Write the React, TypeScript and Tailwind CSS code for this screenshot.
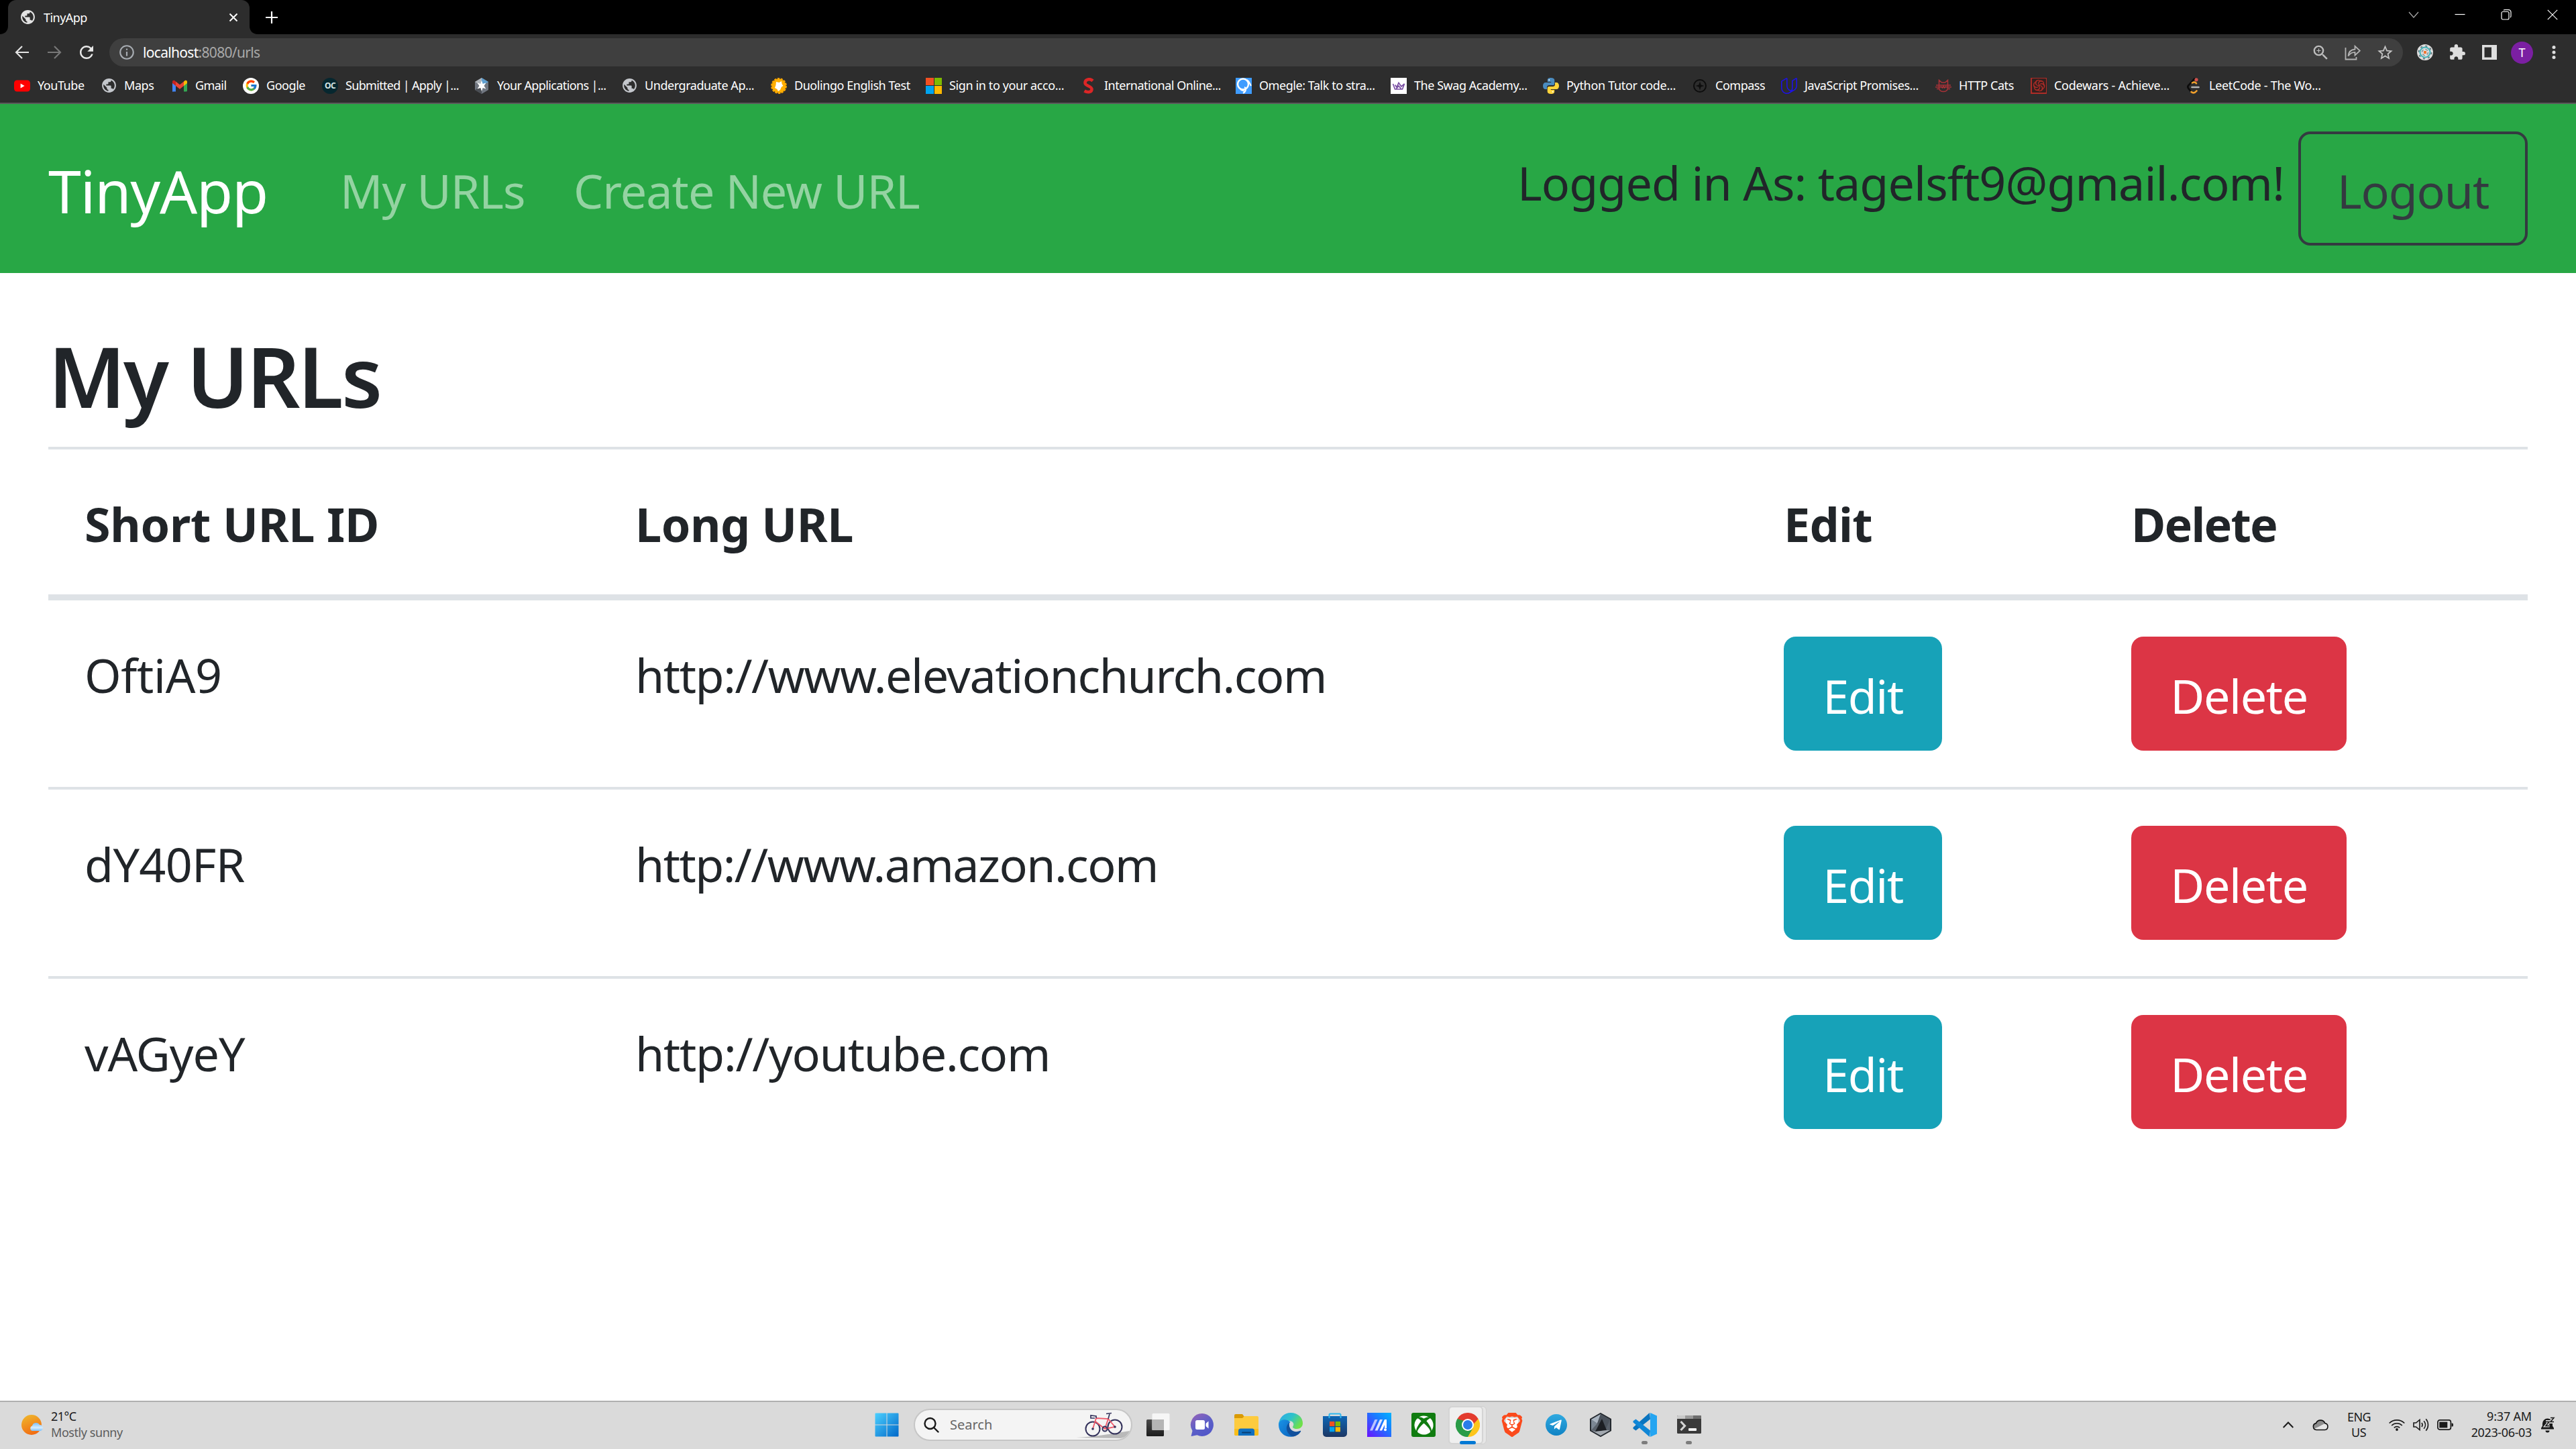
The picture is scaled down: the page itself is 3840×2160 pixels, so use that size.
import type { ReactNode } from "react";
import { FcGoogle } from "react-icons/fc";
import { SiBrave, SiCodewars, SiUdacity } from "react-icons/si";
import { FaTelegramPlane, FaXbox } from "react-icons/fa";
import { MdPublic, MdExtension, MdZoomIn, MdStarBorder, MdInfoOutline, MdRefresh } from "react-icons/md";

/* ---------- bookmark icons ---------- */

const Globe = () => <MdPublic className="-mr-px -ml-px size-[25px] text-[#c4c7cc]" />;

const YouTube = () => (
  <svg viewBox="0 0 24 24" className="size-6">
    <rect x="0" y="3.5" width="24" height="17" rx="4.5" fill="#ff0000" />
    <path d="M9.6 8.4v7.2l6-3.6z" fill="#fff" />
  </svg>
);

const Gmail = () => (
  <svg viewBox="0 0 24 24" className="size-6">
    <path d="M1 20.5V6l5 4v10.500H2.500A1.500 1.500 0 0 1 1 20.500z" fill="#4285f4" />
    <path d="M18 20.500V10l5-4v13a1.500 1.500 0 0 1-1.500 1.500z" fill="#34a853" />
    <path d="M18 5.500l1.500-1.200C21 3.200 23 4.200 23 6v2l-5 4z" fill="#fbbc04" />
    <path d="M6 12V5.500l6 4.800 6-4.800V12l-6 4.800z" fill="#ea4335" />
    <path d="M1 8V6c0-1.800 2-2.800 3.500-1.700L6 5.500V12z" fill="#c5221f" />
  </svg>
);

const Google = () => (
  <span className="flex size-6 items-center justify-center rounded-full bg-white">
    <FcGoogle className="size-[19px]" />
  </span>
);

const Ouac = () => (
  <span className="flex size-6 items-center justify-center rounded-full bg-[#06272f] text-[12px] font-bold tracking-[-0.04em] text-[#d8e6e6]">OC</span>
);

const Hexagon = () => (
  <svg viewBox="0 0 24 24" className="size-6">
    <path d="M12 0l10 6v12l-10 6L2 18V6z" fill="#707680" />
    <path d="M12 0l10 6-10 6z" fill="#5f9fcf" />
    <path d="M12 0L2 6l10 6z" fill="#aeb4ba" />
    <path d="M2 18l10-6v12z" fill="#4a4e54" />
    <path d="M12 4l1.700 5L18.500 7.500 15.500 12l3 4.500-4.800-1.500L12 20l-1.700-5-4.800 1.500 3-4.500-3-4.500L10.300 9z" fill="#fff" />
  </svg>
);

const Duolingo = () => (
  <svg viewBox="0 0 24 24" className="size-6">
    <circle cx="12" cy="12" r="10.600" fill="none" stroke="#ffa600" strokeWidth="2.600" strokeDasharray="3.300 1.450" />
    <circle cx="12" cy="12" r="10.500" fill="#ffae00" />
    <path d="M8 6l4.500 1L16 5l.500 4 2 3-2.500 1.500L14 18l-3 2-1.500-3L6 15l1.500-4z" fill="#fff" />
  </svg>
);

const Microsoft = () => (
  <span className="grid size-6 grid-cols-2 gap-px">
    <span className="bg-[#f25022]" />
    <span className="bg-[#7fba00]" />
    <span className="bg-[#00a4ef]" />
    <span className="bg-[#ffb900]" />
  </span>
);

const RedS = () => (
  <svg viewBox="0 0 24 24" className="size-6">
    <path d="M18 4.500C14 0.500 6.500 2 6.500 7.500c0 5 10 4.500 10 9.500 0 4.500-6 5.500-11 2.500" fill="none" stroke="#dc2626" strokeWidth="4.600" />
  </svg>
);

const Omegle = () => (
  <svg viewBox="0 0 24 24" className="size-6">
    <rect width="24" height="24" fill="#3f9cff" />
    <ellipse cx="11" cy="9.500" rx="8" ry="8" fill="none" stroke="#fff" strokeWidth="2.400" />
    <path d="M17 3c4 3 4.500 7 6 9M13 14c3 1 3 6-2 9M7 17c2 3 4 1 6 3" fill="none" stroke="#fff" strokeWidth="2" />
  </svg>
);

const Swag = () => (
  <svg viewBox="0 0 24 24" className="size-6">
    <rect width="24" height="24" fill="#fff" />
    <path d="M3.500 9l3 8h11l3-8-4.500 4L12 7.500 9 14 6.500 10.500M8 17l4-5 4 5" fill="none" stroke="#7a4fa3" strokeWidth="1.700" />
  </svg>
);

const Python = () => (
  <svg viewBox="0 0 24 24" className="size-6">
    <path d="M12 0C8 0 6.800 1.500 6.800 3.500V6H12.200v1H4C1.500 7 0 9 0 12s1.500 5 3.800 5H6v-3c0-2 1.500-3 3.200-3h5.600c1.600 0 2.500-1.200 2.500-2.600V3.500C17.300 1.400 15.500 0 12 0z" fill="#4b8bbe" />
    <path d="M12 24c4 0 5.200-1.500 5.200-3.500V18h-5.400v-1H20c2.500 0 4-2 4-5s-1.500-5-3.800-5H18v3c0 2-1.500 3-3.200 3H9.200c-1.600 0-2.500 1.200-2.500 2.600v4.900C6.700 22.600 8.500 24 12 24z" fill="#ffd43b" />
    <circle cx="9.300" cy="3.200" r="1" fill="#fff" />
    <circle cx="14.700" cy="20.800" r="1" fill="#fff" />
  </svg>
);

const Compass = () => (
  <svg viewBox="0 0 24 24" className="size-6">
    <circle cx="12" cy="12" r="9" fill="none" stroke="#0d0d0d" strokeWidth="2" />
    <path d="M12 5.500l1.600 4.900L18.500 12l-4.900 1.600L12 18.500l-1.600-4.900L5.500 12l4.900-1.600z" fill="#0d0d0d" />
  </svg>
);

const Udacity = () => <SiUdacity className="size-6 text-[#1d12e8]" />;

const HttpCats = () => (
  <svg viewBox="0 0 24 24" className="size-6" fill="none" stroke="#a83238" strokeWidth="1.600">
    <path d="M5.500 11V3.500l4 3.500h5l4-3.500V15c0 3.500-3 5.500-6.500 5.500S5.500 18.500 5.500 15v-4M1 11h22M0 13.800h24M8 12.500l2.500 2.500L12 12.500l1.500 2.500 2.500-2.500M2 16.500h3M19 16.500h3" />
  </svg>
);

const Codewars = () => (
  <span className="flex size-6 items-center justify-center bg-[#ad2c27]">
    <SiCodewars className="size-[21px] text-[#33201f]" />
  </span>
);

const LeetCode = () => (
  <svg viewBox="0 0 24 24" className="size-6" fill="none" strokeWidth="2.600" strokeLinecap="round">
    <path d="M13 1.500L4.500 11c-1.500 1.600-1.500 3.500 0 5.200l4 4.800" stroke="#0b0b0b" />
    <path d="M10 7.500c2.500-1.600 4.500-1.200 6 .800M8.500 21c3 2.500 5.500 1.500 8-1.500" stroke="#f0a02c" />
    <path d="M9.500 14h10" stroke="#b5b5b5" />
    <circle cx="16" cy="2.800" r="2.600" fill="#d3504c" />
  </svg>
);

const bookmarks: { name: string; cls: string; icon: ReactNode }[] = [
  { name: "YouTube", cls: "w-[130px] tracking-[-0.028em]", icon: <YouTube /> },
  { name: "Maps", cls: "w-[105px] tracking-[-0.028em]", icon: <Globe /> },
  { name: "Gmail", cls: "w-[106px] tracking-[-0.035em]", icon: <Gmail /> },
  { name: "Google", cls: "w-[118px] tracking-[-0.028em]", icon: <Google /> },
  { name: "Submitted | Apply |...", cls: "w-[226px] tracking-[-0.042em]", icon: <Ouac /> },
  { name: "Your Applications |...", cls: "w-[221px] tracking-[-0.038em]", icon: <Hexagon /> },
  { name: "Undergraduate Ap...", cls: "w-[222px] tracking-[-0.028em]", icon: <Globe /> },
  { name: "Duolingo English Test", cls: "w-[231px] tracking-[-0.028em]", icon: <Duolingo /> },
  { name: "Sign in to your acco...", cls: "w-[231px] tracking-[-0.024em]", icon: <Microsoft /> },
  { name: "International Online...", cls: "w-[231px] tracking-[-0.031em]", icon: <RedS /> },
  { name: "Omegle: Talk to stra...", cls: "w-[231px] tracking-[-0.028em]", icon: <Omegle /> },
  { name: "The Swag Academy...", cls: "w-[227px] tracking-[-0.028em]", icon: <Swag /> },
  { name: "Python Tutor code...", cls: "w-[222px] tracking-[-0.02em]", icon: <Python /> },
  { name: "Compass", cls: "w-[133px] tracking-[-0.03em]", icon: <Compass /> },
  { name: "JavaScript Promises...", cls: "w-[230px] tracking-[-0.027em]", icon: <Udacity /> },
  { name: "HTTP Cats", cls: "w-[142px] tracking-[-0.028em]", icon: <HttpCats /> },
  { name: "Codewars - Achieve...", cls: "w-[231px] tracking-[-0.018em]", icon: <Codewars /> },
  { name: "LeetCode - The Wo...", cls: "w-[230px] tracking-[-0.018em]", icon: <LeetCode /> },
];

/* ---------- browser chrome ---------- */

function TabStrip() {
  return (
    <div className="flex h-[51px] items-start bg-black text-white">
      <div className="relative ml-3 flex h-[51px] w-[360px] items-center rounded-t-[12px] bg-[#2d2d2d] pl-[18px]">
        <svg viewBox="0 0 12 12" className="absolute bottom-0 -left-3 size-3" fill="#2d2d2d">
          <path d="M12 0v12H0C7 12 12 7 12 0z" />
        </svg>
        <svg viewBox="0 0 12 12" className="absolute -right-3 bottom-0 size-3" fill="#2d2d2d">
          <path d="M0 0v12h12C5 12 0 7 0 0z" />
        </svg>
        <MdPublic className="-ml-px size-[25px] text-[#e3e3e3]" />
        <span className="ml-[11px] text-[18px] leading-6 tracking-[-0.03em]">TinyApp</span>
        <svg viewBox="0 0 12 12" className="mr-[18px] ml-auto size-3" stroke="#fff" strokeWidth="2">
          <path d="M.500.500l11 11M11.500.500l-11 11" />
        </svg>
      </div>
      <svg viewBox="0 0 18 18" className="mt-[17px] ml-6 size-[18px]" stroke="#fff" strokeWidth="2.200">
        <path d="M9 0v18M0 9h18" />
      </svg>
      <div className="mt-3.5 mr-[27px] ml-auto flex gap-[53px]">
        <svg viewBox="0 0 16 16" className="size-4" fill="none" stroke="#a8a8a8" strokeWidth="1.200">
          <path d="M1 4l7 8 7-8" />
        </svg>
        <svg viewBox="0 0 16 16" className="size-4" stroke="#fff" strokeWidth="1.200">
          <path d="M.500 7.500h15" />
        </svg>
        <svg viewBox="0 0 16 16" className="size-4" fill="none" stroke="#fff" strokeWidth="1.200">
          <rect x="1" y="3.500" width="11" height="11.500" rx="2" />
          <path d="M4 1.500c.600-.700 1.200-.900 2-.900h5.500a3.500 3.500 0 0 1 3.500 3.500v6c0 .800-.200 1.400-.900 2" />
        </svg>
        <svg viewBox="0 0 16 16" className="size-4" stroke="#fff" strokeWidth="1.200">
          <path d="M.800.800l14.400 14.400M15.200.800L.800 15.200" />
        </svg>
      </div>
    </div>
  );
}

function Toolbar() {
  return (
    <div className="flex h-[51px] items-center bg-[#2d2d2d] pt-[3px]">
      <svg viewBox="0 0 24 24" className="ml-[21px] size-6" fill="none" stroke="#e3e3e3" strokeWidth="2.200">
        <path d="M22 12H3M12 3l-9 9 9 9" />
      </svg>
      <svg viewBox="0 0 24 24" className="ml-6 size-6" fill="none" stroke="#777" strokeWidth="2.200">
        <path d="M2 12h19M12 3l9 9-9 9" />
      </svg>
      <MdRefresh className="ml-[21px] size-[30px] text-[#e8e8e8]" />
      <div className="ml-[19px] flex h-[42px] w-[3419px] items-center rounded-full bg-[#3f3f3f] pr-[13px] pl-[13px]">
        <MdInfoOutline className="size-[26px] text-[#a8adb3]" />
        <span className="ml-[11px] text-[21px] leading-7 tracking-[-0.0325em] text-[#a9a9a9]">
          <span className="text-white">localhost</span>:8080/urls
        </span>
        <MdZoomIn className="ml-auto size-[29px] text-[#bcbcbc]" />
        <svg viewBox="0 0 24 24" className="ml-[21px] size-6" fill="none" stroke="#b4b4b4" strokeWidth="1.800">
          <path d="M1.500 5v17.500h16V19M5.500 17.500C6 11 9.500 8 15.500 7.500V2.800l7.300 6.800-7.300 6.800v-4.600c-4.500 0-7.500 1.700-10 5.700z" />
        </svg>
        <MdStarBorder className="ml-[23px] size-[27px] text-[#c4c4c4]" />
      </div>
      <div className="ml-[21px] flex items-center">
        <svg viewBox="0 0 24 24" className="size-6" fill="none">
          <circle cx="12" cy="12" r="12" fill="#dedede" />
          <circle cx="12" cy="12" r="9.500" stroke="#6b7b80" strokeWidth="2" strokeDasharray="3 4.460" />
          <circle cx="12" cy="12" r="7.500" stroke="#45b3b8" strokeWidth="2" />
          <circle cx="12" cy="12" r="4.500" stroke="#6b7b80" strokeWidth="1.200" strokeDasharray="4 3" />
          <rect x="10" y="10" width="4" height="4" fill="#f07832" />
        </svg>
        <MdExtension className="ml-[23px] size-[26px] text-[#dedede]" />
        <svg viewBox="0 0 22 22" className="ml-6 size-[22px]">
          <rect width="22" height="22" fill="#dedede" />
          <rect x="3.500" y="3.500" width="10.500" height="15" fill="#2d2d2d" />
        </svg>
        <span className="ml-[21px] flex size-[33px] items-center justify-center rounded-full bg-[#7b1fa2] text-[18px] text-white">T</span>
        <svg viewBox="0 0 6 22" className="ml-7 h-[22px] w-1.5" fill="#dedede">
          <circle cx="3" cy="3.500" r="2.500" />
          <circle cx="3" cy="11" r="2.500" />
          <circle cx="3" cy="18.500" r="2.500" />
        </svg>
      </div>
    </div>
  );
}

function BookmarkBar() {
  return (
    <div className="flex h-[53px] items-center border-b-2 border-[#5a5a5a] bg-[#2d2d2d] pl-[21px] text-white">
      {bookmarks.map((b) => (
        <div key={b.name} className={`flex shrink-0 items-center gap-[11px] whitespace-nowrap ${b.cls}`}>
          {b.icon}
          <span className="-mt-0.5 text-[18px] leading-6">{b.name}</span>
        </div>
      ))}
    </div>
  );
}

/* ---------- page ---------- */

function Navbar() {
  return (
    <nav className="flex h-[252px] items-start bg-[#28a745] px-[72px] whitespace-nowrap">
      <span className="mt-[69px] w-[435px] text-[88px] leading-[120px] tracking-[-0.0138em] text-white">TinyApp</span>
      <span className="mt-[75px] w-[348px] text-[70px] leading-[108px] tracking-[-0.0138em] text-white/50">My URLs</span>
      <span className="mt-[75px] text-[70px] leading-[108px] tracking-[-0.0139em] text-white/50">Create New URL</span>
      <span className="mt-[63px] ml-auto w-[1164px] text-[70px] leading-[108px] tracking-[-0.0132em] text-[#212529]">
        Logged in As: tagelsft9@gmail.com!
      </span>
      <button className="mt-[41px] h-[170px] w-[342px] rounded-[18px] border-4 border-[#343a40] pt-1.5 text-center text-[70px] leading-[108px] tracking-[-0.016em] text-[#343a40]">
        Logout
      </button>
    </nav>
  );
}

const rows = [
  { id: "OftiA9", url: "http://www.elevationchurch.com", idLs: "tracking-[-0.005em]", urlLs: "tracking-[-0.0204em]" },
  { id: "dY40FR", url: "http://www.amazon.com", idLs: "tracking-[-0.0095em]", urlLs: "tracking-[-0.0221em]" },
  { id: "vAGyeY", url: "http://youtube.com", idLs: "tracking-[-0.0144em]", urlLs: "tracking-[-0.0175em]" },
];

function UrlTable() {
  return (
    <div className="mt-[31px] text-[70px] leading-[108px] text-[#212529]">
      <div className="grid h-[229px] grid-cols-[821px_1712px_518px_1fr] border-t-4 border-b-[9px] border-[#dee2e6] pt-[57px] font-bold">
        <div className="pl-[54px] tracking-[-0.004em]">Short URL ID</div>
        <div className="pl-[54px] tracking-[-0.007em]">Long URL</div>
        <div className="pl-[54px] tracking-[-0.01em]">Edit</div>
        <div className="pl-[54px] tracking-[-0.0256em]">Delete</div>
      </div>
      <div>
        {rows.map((r) => (
          <div key={r.id} className="grid grid-cols-[821px_1712px_518px_1fr] border-t-4 border-[#dee2e6] first:border-t-0">
            <div className={`pt-[57px] pl-[54px] ${r.idLs}`}>{r.id}</div>
            <div className={`pt-[57px] pl-[54px] ${r.urlLs}`}>{r.url}</div>
            <div className="h-[278px] pt-[54px] pl-[54px]">
              <button className="block h-[170px] w-[236px] rounded-[18px] bg-[#17a2b8] pt-1.5 text-center tracking-[-0.02em] text-white">Edit</button>
            </div>
            <div className="h-[278px] pt-[54px] pl-[54px]">
              <button className="block h-[170px] w-[321px] rounded-[18px] bg-[#dc3545] pt-1.5 text-center tracking-[-0.02em] text-white">Delete</button>
            </div>
          </div>
        ))}
      </div>
    </div>
  );
}

/* ---------- taskbar icons ---------- */

const box = "size-9 shrink-0";

const WindowsLogo = () => (
  <svg viewBox="0 0 36 36" className={box}>
    <defs>
      <linearGradient id="win" x1="0" y1="0" x2="1" y2="1">
        <stop offset="0" stopColor="#4cd0ff" />
        <stop offset="1" stopColor="#0067c8" />
      </linearGradient>
    </defs>
    <path d="M1.500 .500h16v17h-17v-16a1 1 0 0 1 1-1zM18.500.500h16a1 1 0 0 1 1 1v16h-17zM.500 18.500h17v17h-16a1 1 0 0 1-1-1zM18.500 18.500h17v16a1 1 0 0 1-1 1h-16z" fill="url(#win)" />
  </svg>
);

const TaskView = () => (
  <svg viewBox="0 0 36 36" className={box}>
    <defs>
      <linearGradient id="tv" x1="0" y1="0" x2="0" y2="1">
        <stop offset="0" stopColor="#4a4a4a" />
        <stop offset="1" stopColor="#1c1c1c" />
      </linearGradient>
    </defs>
    <rect x="1" y="10" width="26" height="25" rx="1.500" fill="url(#tv)" />
    <rect x="9.500" y="1" width="26" height="25" rx="1.500" fill="#f6f6f6" />
    <rect x="9.500" y="10" width="17.500" height="16" fill="#b4b4b4" />
  </svg>
);

const Chat = () => (
  <svg viewBox="0 0 36 36" className={box}>
    <defs>
      <linearGradient id="chat" x1="0" y1="0" x2=".6" y2="1">
        <stop offset="0" stopColor="#9a64b8" />
        <stop offset=".6" stopColor="#5b5fc7" />
        <stop offset="1" stopColor="#5257c9" />
      </linearGradient>
    </defs>
    <path d="M18 1a17 17 0 1 1-7.500 32.300L1.500 35l2-8A17 17 0 0 1 18 1z" fill="url(#chat)" />
    <rect x="8" y="11" width="14" height="14" rx="2.500" fill="#fff" />
    <path d="M23.500 16l4-3.500v11l-4-3.500z" fill="#fff" />
  </svg>
);

const Folder = () => (
  <svg viewBox="0 0 36 36" className={box}>
    <path d="M0 4a2 2 0 0 1 2-2h10l3 4v4H0z" fill="#d99a06" />
    <path d="M0 8h12l3-3h19a2 2 0 0 1 2 2v25a2 2 0 0 1-2 2H2a2 2 0 0 1-2-2z" fill="#fdcb3e" />
    <path d="M0 24h36v8a2 2 0 0 1-2 2H2a2 2 0 0 1-2-2z" fill="#f9bd1c" />
    <path d="M6 34V27a3.500 3.500 0 0 1 3.500-3.500h17A3.500 3.500 0 0 1 30 27v7z" fill="#0f6fc0" />
    <rect x="11" y="28.500" width="14" height="2" rx="1" fill="#083f73" />
  </svg>
);

const Edge = () => (
  <svg viewBox="0 0 36 36" className={box}>
    <defs>
      <linearGradient id="e1" x1="0" y1="0" x2="1" y2=".5">
        <stop offset="0" stopColor="#2aa9ea" />
        <stop offset=".55" stopColor="#2fc2c9" />
        <stop offset="1" stopColor="#6fe04a" />
      </linearGradient>
      <linearGradient id="e2" x1="0" y1="0" x2="1" y2="1">
        <stop offset="0" stopColor="#1a93e6" />
        <stop offset="1" stopColor="#0a62bd" />
      </linearGradient>
    </defs>
    <path d="M0 17C1 7 8.500 0 18 0c10.500 0 18 7 18 15.500 0 5.500-4 8.500-8.500 8.500-5 0-7.500-2-6-4 2.500-3.500-.500-8-6-8C8 12 1 15 0 17z" fill="url(#e1)" />
    <path d="M0 18C0 11 8 9 13 11c3 1 4.500 3 4.500 3C12 17 12 28 21 33.500c1.500 1 2.500 1.500 0 2C10 37.500 0 29.500 0 18z" fill="url(#e2)" />
    <path d="M16 14.500C8 21 12.500 33 22 35.500c5-1 9-4 11-7.500.500-1-.300-1.500-1.200-1-8 3.500-17.500-1-15.800-12.500z" fill="#11509c" />
  </svg>
);

const Store = () => (
  <svg viewBox="0 0 36 36" className={box}>
    <defs>
      <linearGradient id="st" x1="0" y1="0" x2="0" y2="1">
        <stop offset="0" stopColor="#0d66b5" />
        <stop offset="1" stopColor="#1c3764" />
      </linearGradient>
    </defs>
    <path d="M0 5h36v26a5 5 0 0 1-5 5H5a5 5 0 0 1-5-5z" fill="url(#st)" />
    <path d="M9.500 8V3a1.500 1.500 0 0 1 1.500-1.500h14A1.500 1.500 0 0 1 26.500 3v5" fill="none" stroke="#30b7ee" strokeWidth="2" />
    <path d="M10 13h7.300v7H10z" fill="#f25022" />
    <path d="M18.700 13H26v7h-7.300z" fill="#7fba00" />
    <path d="M10 21.300h7.300v7H10z" fill="#00a4ef" />
    <path d="M18.700 21.300H26v7h-7.300z" fill="#ffb900" />
  </svg>
);

const MyAsus = () => (
  <svg viewBox="0 0 36 36" className={box}>
    <defs>
      <linearGradient id="ma" x1="0" y1="1" x2="1" y2="0">
        <stop offset="0" stopColor="#6a11ff" />
        <stop offset=".6" stopColor="#1a7bff" />
        <stop offset="1" stopColor="#00b4ff" />
      </linearGradient>
    </defs>
    <rect width="36" height="36" fill="url(#ma)" />
    <path d="M4 26.500l7.500-16.500h4L8 26.500z" fill="#b9c3ff" />
    <path d="M11.500 26.500L19 10h4l-7.500 16.500z" fill="#dfe4ff" />
    <path d="M18.500 26.500L26 10h3v13h-3v-5l-4 8.500z" fill="#fff" />
    <circle cx="27" cy="25.200" r="2" fill="#fff" />
  </svg>
);

const Xbox = () => (
  <span className="flex size-9 shrink-0 items-center justify-center rounded-[3px] bg-[#107c10]">
    <FaXbox className="size-[29px] text-white" />
  </span>
);

const Chrome = () => (
  <span className="relative size-9 shrink-0">
    <span className="absolute -top-2.5 -left-[11px] h-[57px] w-[57px] rounded-md border border-[#cfcfcf] bg-[#e6e6e6]" />
    <span className="absolute -top-2.5 -left-[11px] h-[57px] w-[52px] rounded-md border-2 border-[#d4d4d4] bg-[#efefef]" />
    <svg viewBox="0 0 36 36" className="absolute inset-0 size-9">
      <path d="M18 18L2.400 9A18 18 0 0 1 33.600 9z" fill="#e33b2e" />
      <path d="M18 18V36A18 18 0 0 1 2.400 9z" fill="#2a9c48" />
      <path d="M18 18L33.600 9A18 18 0 0 1 18 36z" fill="#fdc51b" />
      <path d="M18 9h15.600l-8 9z" fill="#e33b2e" />
      <path d="M10.200 22.500L2.400 9l10 3z" fill="#2a9c48" />
      <path d="M25.800 22.500L18 36l-2-10z" fill="#fdc51b" />
      <path d="M10.200 22.500l7.800 4.500 7.800-4.500L18 36a18 18 0 0 1-8-2.200z" fill="#2a9c48" />
      <circle cx="18" cy="18" r="9" fill="#fff" />
      <circle cx="18" cy="18" r="7" fill="#2b7de9" />
    </svg>
    <span className="absolute top-[42px] left-1.5 h-[5px] w-6 rounded-full bg-[#0078d4]" />
  </span>
);

const Brave = () => (
  <span className="relative flex size-9 shrink-0 items-center justify-center">
    <span className="absolute top-2 left-[9px] h-[21px] w-[18px] rounded-b-full bg-white" />
    <SiBrave className="relative size-9 text-[#fb4a1c]" />
  </span>
);

const Telegram = () => (
  <span className="mx-0.5 flex size-8 shrink-0 items-center justify-center self-center rounded-full bg-linear-to-b from-[#2fa9e0] to-[#0f83c4]">
    <FaTelegramPlane className="mr-0.5 size-5 text-white" />
  </span>
);

const Hex = () => (
  <svg viewBox="0 0 36 36" className={box}>
    <path d="M18 1l15 8.500v17L18 35 3 26.500v-17z" fill="#59616b" stroke="#23282e" strokeWidth="2" />
    <path d="M18 2L4 10l9 6z" fill="#a9b4c0" />
    <path d="M4 10v16l9-10z" fill="#7b8794" />
    <path d="M18 2l14 8-6 14-13-8z" fill="#4a525c" />
    <path d="M20 9l7 17-17 2z" fill="#1c1f24" />
    <path d="M4 26l14 8 14-8-5 0-17 2z" fill="#a2a8af" />
  </svg>
);

const VsCode = () => (
  <span className="relative size-9 shrink-0">
    <svg viewBox="0 0 36 36" className="size-9">
      <path d="M26 9.500L4.500 26.500.500 23.800v-2L25 0z" fill="#0a74bf" />
      <path d="M26 26.500L4.500 9.500.500 12.200v2L25 36z" fill="#0f86d6" />
      <path d="M26 0l10 4.500v27L26 36z" fill="#25a5f1" />
    </svg>
    <span className="absolute top-[42px] left-[13px] h-[5px] w-[9px] rounded-full bg-[#7c7c7c]" />
  </span>
);

const Terminal = () => (
  <span className="relative size-9 shrink-0">
    <svg viewBox="0 0 36 36" className="size-9">
      <rect y="4" width="36" height="27" rx="1.500" fill="#3a3a3a" />
      <path d="M0 5.500A1.500 1.500 0 0 1 1.500 4H12v5H0z" fill="#c9c9c9" />
      <path d="M12 4h12v5H12z" fill="#999" />
      <path d="M24 4h10.500A1.500 1.500 0 0 1 36 5.500V9H24z" fill="#6e6e6e" />
      <path d="M5.500 13l6 6.500-6 6.500" fill="none" stroke="#d4d4d4" strokeWidth="3.200" />
      <rect x="17" y="23" width="12" height="4" rx="1" fill="#f4f4f4" />
    </svg>
    <span className="absolute top-[42px] left-[13px] h-[5px] w-[9px] rounded-full bg-[#7c7c7c]" />
  </span>
);

const Bike = () => (
  <svg viewBox="0 0 84 44" className="h-11 w-[84px]" fill="none">
    <path d="M2 41c25-1 50-5 80-10-2 6-6 10-14 11z" fill="#b9b9b9" />
    <circle cx="27" cy="28" r="10.500" stroke="#35335c" strokeWidth="2" />
    <circle cx="60" cy="25" r="10.500" stroke="#35335c" strokeWidth="2" />
    <path d="M27 28l5-16 18 1-5 15-14-11M50 13l10 12-15 3" stroke="#ee5a6b" strokeWidth="1.800" />
    <path d="M32 12V9l-8-1v4h6M50 13l2-7M47 5.500l8-1" stroke="#35335c" strokeWidth="1.700" />
    <circle cx="45" cy="28" r="3.500" stroke="#35335c" strokeWidth="2" />
    <circle cx="27" cy="28" r="1.800" fill="#35335c" />
    <circle cx="60" cy="25" r="1.800" fill="#35335c" />
  </svg>
);

function Taskbar() {
  return (
    <div className="flex h-[72px] items-center border-t-2 border-[#b0b0b0] bg-[#dadada] pb-0.5 text-[18px] leading-6 whitespace-nowrap text-[#1a1a1a]">
      <div className="flex w-[1304px] shrink-0 items-center pl-8">
        <svg viewBox="0 0 34 32" className="h-8 w-[34px]">
          <defs>
            <linearGradient id="sun" x1=".2" y1="0" x2=".6" y2="1">
              <stop offset="0" stopColor="#efb62c" />
              <stop offset="1" stopColor="#f26a12" />
            </linearGradient>
            <linearGradient id="cl" x1="0" y1="0" x2="0" y2="1">
              <stop offset="0" stopColor="#7cc0fb" />
              <stop offset=".6" stopColor="#d6edff" />
              <stop offset="1" stopColor="#7cc0fb" />
            </linearGradient>
          </defs>
          <circle cx="15" cy="16" r="15" fill="url(#sun)" />
          <path d="M16 25a4 4 0 0 1 0-7.600 6 6 0 0 1 11-1.400 4.600 4.600 0 0 1 1.500 9z" fill="url(#cl)" />
        </svg>
        <div className="-mt-0.5 ml-2.5">
          <div className="tracking-[-0.03em]">21°C</div>
          <div className="tracking-[-0.0244em] text-[#5c5c5c]">Mostly sunny</div>
        </div>
      </div>
      <WindowsLogo />
      <div className="mr-5 ml-[22px] flex h-12 w-[326px] shrink-0 items-center overflow-hidden rounded-full border-2 border-[#c6c6c6] bg-[#f4f4f4] pl-3">
        <svg viewBox="0 0 24 24" className="size-6" fill="none" stroke="#1a1a1a" strokeWidth="2.400">
          <circle cx="10.500" cy="10" r="8" />
          <path d="M16 16l6.500 6.500" strokeLinecap="round" />
        </svg>
        <span className="ml-4 text-[20px] text-[#666]">Search</span>
        <span className="ml-auto">
          <Bike />
        </span>
      </div>
      <div className="flex gap-[30px]">
        <TaskView />
        <Chat />
        <Folder />
        <Edge />
        <Store />
        <MyAsus />
        <Xbox />
        <Chrome />
        <Brave />
        <Telegram />
        <Hex />
        <VsCode />
        <Terminal />
      </div>
      <div className="mr-[30px] ml-auto flex items-center">
        <svg viewBox="0 0 16 10" className="h-2.5 w-4" fill="none" stroke="#1a1a1a" strokeWidth="2">
          <path d="M.700 9L8 1.500 15.300 9" />
        </svg>
        <svg viewBox="0 0 24 18" className="ml-7 h-[18px] w-6">
          <path d="M6 16.500a5 5 0 0 1-.500-9.900 7.200 7.200 0 0 1 13.300 0 5 5 0 0 1-.300 9.900z" fill="#e6e6e6" />
          <path d="M5 6.600a7.200 7.200 0 0 1 13.500.500L8 12.500 2 15C0 11 2 7.500 5 6.600z" fill="#8d8d8d" />
          <path d="M6 16.500a5 5 0 0 1-.500-9.900 7.200 7.200 0 0 1 13.300 0 5 5 0 0 1-.300 9.900z" fill="none" stroke="#111" strokeWidth="1.600" />
        </svg>
        <div className="ml-[28px] w-[34px] text-center leading-[23px] tracking-[-0.03em]">
          <div>ENG</div>
          <div>US</div>
        </div>
        <svg viewBox="0 0 24 18" className="ml-[28px] h-[18px] w-6" fill="none" stroke="#1a1a1a" strokeWidth="1.700">
          <path d="M.700 6.500a16 16 0 0 1 22.600 0M4.200 10a11 11 0 0 1 15.600 0M7.800 13.300a6 6 0 0 1 8.400 0" />
          <circle cx="12" cy="16" r="1.900" fill="#1a1a1a" stroke="none" />
        </svg>
        <svg viewBox="0 0 24 20" className="ml-3 h-5 w-6" fill="none" stroke="#1a1a1a" strokeWidth="1.600">
          <path d="M1 7h3.500L10 2.500v15L4.500 13H1zM13 7c1.300 1.800 1.300 4.200 0 6M16.200 4.200c3 3.500 3 8.100 0 11.600M19.300 1.200c4.300 5 4.300 12.600 0 17.600" />
        </svg>
        <svg viewBox="0 0 24 16" className="ml-3 h-4 w-6">
          <rect x=".900" y=".900" width="19.500" height="14.200" rx="3" fill="none" stroke="#1a1a1a" strokeWidth="1.700" />
          <rect x="3.300" y="3.600" width="12" height="8.800" fill="#1a1a1a" />
          <path d="M21.500 5.500h1A1.500 1.500 0 0 1 24 7v2a1.500 1.500 0 0 1-1.500 1.500h-1z" fill="#1a1a1a" />
        </svg>
        <div className="-mt-0.5 ml-[25px] w-[92px] text-right">
          <div className="tracking-[-0.01em]">9:37 AM</div>
          <div className="tracking-[-0.02em]">2023-06-03</div>
        </div>
        <svg viewBox="0 0 24 24" className="ml-3 size-6">
          <path d="M2 18.500v-1.700l2-3V10a7.500 7.500 0 0 1 15 0v3.800l2 3v1.700zM8.500 20.500h6a3 3 0 0 1-6 0z" fill="#1a1a1a" />
          <path d="M9 7h5.500L9 13.500h5.500M16 1.500h5L16 8h5" fill="none" stroke="#dadada" strokeWidth="4" />
          <path d="M16 1.500h5L16 7.500h5" fill="none" stroke="#1a1a1a" strokeWidth="1.500" />
          <path d="M9 7.500h5L9 13.500h5" fill="none" stroke="#1a1a1a" strokeWidth="1.500" />
        </svg>
      </div>
    </div>
  );
}

export default function App() {
  return (
    <div className="flex h-[2160px] w-[3840px] flex-col overflow-hidden bg-white font-['Noto_Sans','Open_Sans',sans-serif]">
      <TabStrip />
      <Toolbar />
      <BookmarkBar />
      <Navbar />
      <main className="flex-1 px-[72px] pt-[78px]">
        <h2 className="text-[124px] leading-[150px] font-semibold tracking-[-0.0248em] text-[#212529]">My URLs</h2>
        <UrlTable />
      </main>
      <Taskbar />
    </div>
  );
}
